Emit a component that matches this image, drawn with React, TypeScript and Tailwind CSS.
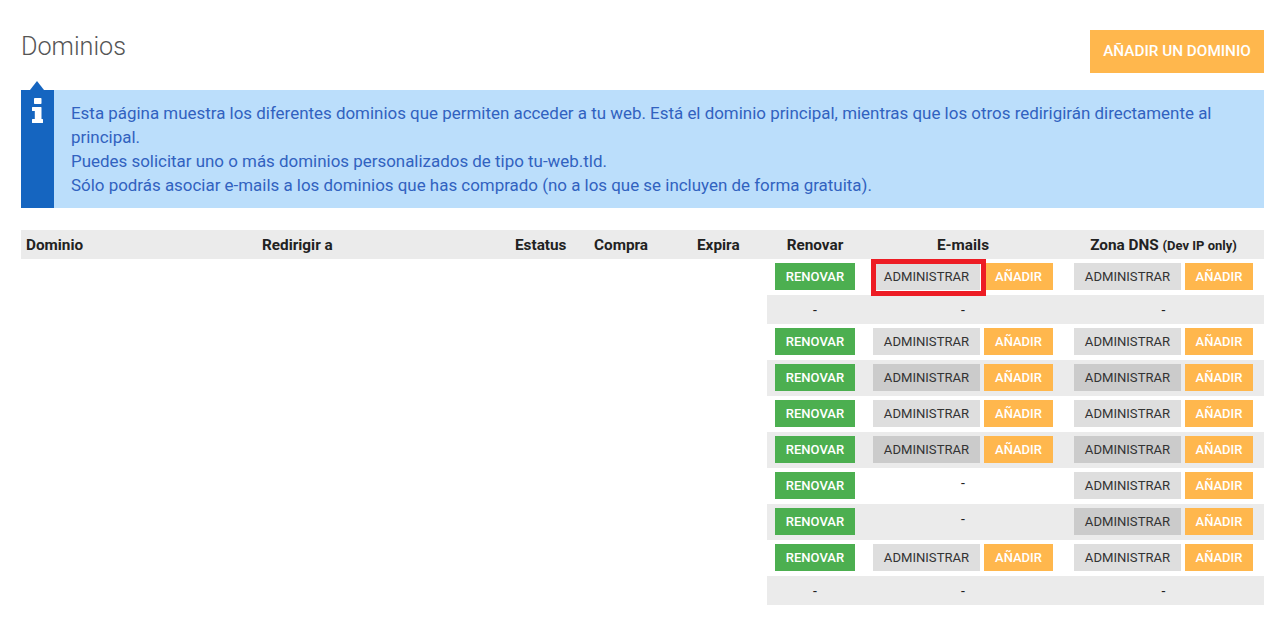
import React from 'react';

type Row = {
  renovar: boolean;
  email: boolean;
  dns: boolean;
  highlight?: boolean;
};

const rows: Row[] = [
  { renovar: true, email: true, dns: true, highlight: true },
  { renovar: false, email: false, dns: false },
  { renovar: true, email: true, dns: true },
  { renovar: true, email: true, dns: true },
  { renovar: true, email: true, dns: true },
  { renovar: true, email: true, dns: true },
  { renovar: true, email: false, dns: true },
  { renovar: true, email: false, dns: true },
  { renovar: true, email: true, dns: true },
  { renovar: false, email: false, dns: false },
];

const InfoIcon = () => (
  <svg viewBox="0 0 11 25" className="mx-auto h-[25px] w-[11px] fill-white">
    <path d="M2 0.7Q2 0 2.7 0H8.8Q9.5 0 9.5 0.7V5.3Q9.5 6 8.8 6H2.7Q2 6 2 5.3Z" />
    <path d="M0.6 9H8.9Q9.5 9 9.5 9.6V21H10.4Q11 21 11 21.6V24.4Q11 25 10.4 25H0.6Q0 25 0 24.4V21.6Q0 21 0.6 21H2.8V13H0.6Q0 13 0 12.4V9.6Q0 9 0.6 9Z" />
  </svg>
);

const AdminButton: React.FC<{ striped: boolean; highlight?: boolean }> = ({ striped, highlight }) => (
  <span
    className={`relative flex h-[27px] w-[107px] items-center justify-center text-[13.1px] text-[#333] ${
      striped ? 'bg-[#cbcbcb]' : 'bg-[#dedede]'
    }`}
  >
    ADMINISTRAR
    {highlight && <span className="absolute -top-[4px] -right-[6px] -bottom-[6px] -left-[2px] border-[5px] border-[#ed1c24]" />}
  </span>
);

const AddButton: React.FC<{ width: string }> = ({ width }) => (
  <span className={`flex h-[27px] items-center justify-center bg-[#ffb74d] text-[13px] font-medium text-white ${width}`}>
    AÑADIR
  </span>
);

const App: React.FC = () => {
  return (
    <div className="min-h-[617px] bg-white px-[21px] font-['Roboto',sans-serif] text-[#333]">
      {/* cabecera */}
      <div className="flex justify-between pt-[30px] pb-[17px]">
        <h1 className="text-[25.2px] leading-[34px] font-light text-[#555]">Dominios</h1>
        <button className="h-[43px] w-[174px] bg-[#ffb74d] text-[15.3px] font-medium text-white">AÑADIR UN DOMINIO</button>
      </div>

      {/* aviso */}
      <div className="flex bg-[#bbdefb]">
        <div className="relative w-[33px] shrink-0 bg-[#1565c0] pt-[8px]">
          <span className="absolute -top-[9px] left-[9px] h-0 w-0 border-x-[7.5px] border-b-[9px] border-x-transparent border-b-[#1565c0]" />
          <InfoIcon />
        </div>
        <p className="py-[11px] pr-[17px] pl-[17px] text-[16.93px] leading-[24px] text-[#3162c0]">
          Esta página muestra los diferentes dominios que permiten acceder a tu web. Está el dominio principal, mientras
          que los otros redirigirán directamente al principal.
          <br />
          Puedes solicitar uno o más dominios personalizados de tipo tu-web.tld.
          <br />
          Sólo podrás asociar e-mails a los dominios que has comprado (no a los que se incluyen de forma gratuita).
        </p>
      </div>

      {/* tabla */}
      <table className="mt-[22px] w-full table-fixed border-collapse text-[14px]">
        <colgroup>
          <col className="w-[236px]" />
          <col className="w-[253px]" />
          <col className="w-[79px]" />
          <col className="w-[103px]" />
          <col className="w-[75px]" />
          <col className="w-[96px]" />
          <col className="w-[200px]" />
          <col className="w-[201px]" />
        </colgroup>
        <thead>
          <tr className="h-[29px] bg-[#ebebeb] text-[15.3px] font-bold text-[#222]">
            <th className="px-[5px] pt-[1px] text-left">Dominio</th>
            <th className="px-[5px] pt-[1px] text-left">Redirigir a</th>
            <th className="px-[5px] pt-[1px] text-left">Estatus</th>
            <th className="px-[5px] pt-[1px] text-left">Compra</th>
            <th className="px-[5px] pt-[1px] text-left">Expira</th>
            <th className="px-[5px] pt-[1px] text-center">Renovar</th>
            <th className="px-[5px] pt-[1px] text-center">E-mails</th>
            <th className="px-[5px] pt-[1px] text-center">
              Zona DNS <span className="text-[13px]">(Dev IP only)</span>
            </th>
          </tr>
        </thead>
        <tbody>
          {rows.map((row, i) => {
            const striped = i % 2 === 1;
            const cell = `p-0 align-top ${striped ? 'bg-[#ebebeb]' : ''}`;
            const dash = 'block pt-[6px] pb-[4px] text-center leading-[19px] text-[#222]';
            return (
              <tr key={i} className={row.renovar ? 'h-[36px]' : 'h-[29px]'}>
                <td colSpan={5} className="p-0" />
                <td className={cell}>
                  {row.renovar ? (
                    <div className="flex justify-center pt-[4px]">
                      <span className="flex h-[27px] w-[80px] items-center justify-center bg-[#4caf50] text-[13px] font-medium text-white">
                        RENOVAR
                      </span>
                    </div>
                  ) : (
                    <span className={dash}>-</span>
                  )}
                </td>
                <td className={cell}>
                  {row.email ? (
                    <div className="flex justify-center gap-[4px] pt-[4px]">
                      <AdminButton striped={striped} highlight={row.highlight} />
                      <AddButton width="w-[69px]" />
                    </div>
                  ) : (
                    <span className={dash}>-</span>
                  )}
                </td>
                <td className={cell}>
                  {row.dns ? (
                    <div className="flex justify-center gap-[4px] pt-[4px]">
                      <AdminButton striped={striped} />
                      <AddButton width="w-[68px]" />
                    </div>
                  ) : (
                    <span className={dash}>-</span>
                  )}
                </td>
              </tr>
            );
          })}
        </tbody>
      </table>
    </div>
  );
};

export default App;
